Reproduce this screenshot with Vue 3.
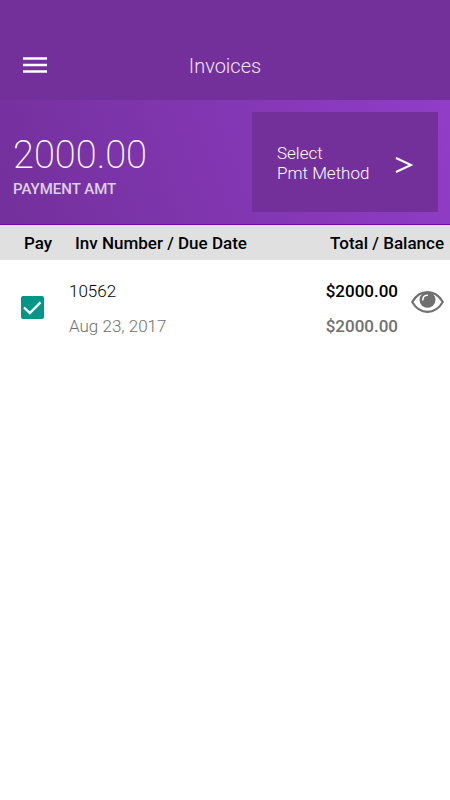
<script setup>
import { ref } from 'vue'

const invoices = ref([
  { number: '10562', due: 'Aug 23, 2017', total: '$2000.00', balance: '$2000.00', pay: true },
])
</script>

<template>
  <div class="screen">
    <header class="topbar">
      <button class="menu" type="button" aria-label="Menu">
        <svg width="24" height="16" viewBox="0 0 24 16" aria-hidden="true">
          <path d="M0 1.500h24M0 8h24M0 14.500h24" stroke="#fff" stroke-width="2.400" />
        </svg>
      </button>
      <h1 class="title">Invoices</h1>
    </header>

    <section class="summary">
      <div class="payment">
        <div class="amount">2000.00</div>
        <div class="label">PAYMENT AMT</div>
      </div>
      <button class="method" type="button">
        <span>Select<br />Pmt Method</span>
        <svg width="18" height="18" viewBox="0 0 18 18" aria-hidden="true">
          <path d="M1 4L16 11L1 18" fill="none" stroke="#fff" stroke-width="2" />
        </svg>
      </button>
    </section>

    <table class="invoices">
      <thead>
        <tr>
          <th class="pay">Pay</th>
          <th class="number">Inv Number / Due Date</th>
          <th class="total" colspan="2">Total / Balance</th>
        </tr>
      </thead>
      <tbody>
        <tr v-for="invoice in invoices" :key="invoice.number">
          <td class="pay">
            <input v-model="invoice.pay" class="tick" type="checkbox" :aria-label="`Pay ${invoice.number}`" />
            <svg class="mark" v-show="invoice.pay" width="23" height="23" viewBox="0 0 23 23" aria-hidden="true">
              <path d="M3 11L8.800 16.500L19.500 5.800" fill="none" stroke="#fff" stroke-width="2.400" />
            </svg>
          </td>
          <td class="number">
            <div>{{ invoice.number }}</div>
            <div class="muted">{{ invoice.due }}</div>
          </td>
          <td class="sum">
            <div>{{ invoice.total }}</div>
            <div class="muted">{{ invoice.balance }}</div>
          </td>
          <td class="view">
            <button type="button" aria-label="View invoice">
              <svg width="33" height="22" viewBox="0 0 33 22" aria-hidden="true">
                <path d="M1.200 11C5 4.500 10.500 1.200 16.500 1.200S28 4.500 31.800 11C28 17.500 22.500 20.800 16.500 20.800S5 17.500 1.200 11Z" fill="none" stroke="#707070" stroke-width="2.200" stroke-linejoin="round" />
                <circle cx="16.500" cy="8.800" r="8" fill="#707070" />
                <path d="M11.800 9C11.800 6.200 13.600 4.300 16.300 4.200" fill="none" stroke="#fff" stroke-width="1.500" stroke-linecap="round" />
              </svg>
            </button>
          </td>
        </tr>
      </tbody>
    </table>
  </div>
</template>

<style>
body {
  background: #fff;
}
</style>

<style scoped>
.screen {
  font-family: Roboto, "Liberation Sans", sans-serif;
  color: #000;
}
button {
  padding: 0;
  border: 0;
  background: none;
  font: inherit;
  color: inherit;
  cursor: pointer;
}
svg {
  display: block;
}
.topbar {
  display: grid;
  grid-template-columns: 1fr auto 1fr;
  align-items: center;
  padding: 30px 23px 0;
  height: 70px;
  background: #73309b;
  color: #fff;
}
.menu {
  justify-self: start;
}
.title {
  margin: 0;
  padding-top: 2px;
  font-size: 20px;
  line-height: 24px;
  font-weight: 300;
  color: #efe6f4;
}
.summary {
  display: flex;
  justify-content: space-between;
  align-items: center;
  padding: 12px 12px 12px 13px;
  border-bottom: 1px solid #7009a8;
  background: linear-gradient(70deg, #73309b, #913dc8);
  color: #fff;
}
.payment {
  padding-top: 8px;
}
.amount {
  font-size: 38px;
  line-height: 44px;
  font-weight: 200;
}
.label {
  padding-top: 2px;
  font-size: 15px;
  line-height: 20px;
  font-weight: 500;
  color: #ddd0e4;
}
.method {
  display: flex;
  justify-content: space-between;
  align-items: center;
  max-width: 186px;
  min-height: 100px;
  padding: 2px 25px 0 25px;
  background: #73309b;
  font-size: 17px;
  line-height: 20px;
  font-weight: 300;
  text-align: left;
  flex: 1;
}
.method svg {
  overflow: visible;
}
.invoices {
  width: 100%;
  border-collapse: collapse;
  font-size: 17px;
  line-height: 20px;
}
th,
td {
  padding: 0;
  text-align: left;
}
th {
  height: 35px;
  background: #e0e0e0;
  font-weight: 500;
}
th.pay {
  width: 45px;
  padding-left: 24px;
}
th.number {
  padding-left: 6px;
}
th.total {
  padding-right: 6px;
  text-align: right;
}
td {
  padding: 21px 0 19px;
}
td div + div {
  padding-top: 15px;
}
td.pay {
  position: relative;
  padding: 0 0 0 21px;
}
.tick {
  display: block;
  appearance: none;
  width: 23px;
  height: 23px;
  margin: 0;
  border: 2px solid #009688;
  border-radius: 2px;
}
.tick:checked {
  background: #009688;
}
.mark {
  position: absolute;
  top: 50%;
  left: 21px;
  transform: translateY(-50%);
  pointer-events: none;
}
td.number {
  font-weight: 300;
}
td.sum {
  font-weight: 500;
  text-align: right;
}
.muted {
  color: #707070;
}
td.view {
  padding: 8px 6px 19px 13px;
  width: 33px;
}
.view button {
  display: block;
}
</style>
